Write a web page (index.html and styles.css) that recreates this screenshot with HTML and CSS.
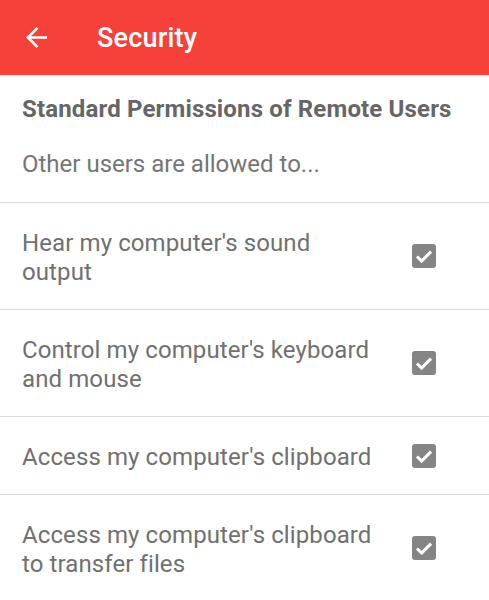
FILE: index.html
```html
<!DOCTYPE html>
<html>
<head>
<meta charset="utf-8">
<link rel="stylesheet" href="styles.css">
</head>
<body>
<header class="appbar">
  <svg class="back" viewBox="4 4 16 16" aria-hidden="true"><path d="M20 11H7.83l5.59-5.59L12 4l-8 8 8 8 1.41-1.41L7.83 13H20v-2z" fill="#fff"/></svg>
  <h1 class="title">Security</h1>
</header>
<section class="intro">
  <h2 class="heading">Standard Permissions of Remote Users</h2>
  <p class="sub">Other users are allowed to...</p>
</section>
<ul class="list">
  <li class="row"><span class="label">Hear my computer's sound output</span><span class="check"><svg viewBox="0 0 24 24"><path d="M5 12.5l4.6 4.6L19 7.6" fill="none" stroke="#fff" stroke-width="3"/></svg></span></li>
  <li class="row"><span class="label">Control my computer's keyboard and mouse</span><span class="check"><svg viewBox="0 0 24 24"><path d="M5 12.5l4.6 4.6L19 7.6" fill="none" stroke="#fff" stroke-width="3"/></svg></span></li>
  <li class="row"><span class="label">Access my computer's clipboard</span><span class="check"><svg viewBox="0 0 24 24"><path d="M5 12.5l4.6 4.6L19 7.6" fill="none" stroke="#fff" stroke-width="3"/></svg></span></li>
  <li class="row"><span class="label">Access my computer's clipboard to transfer files</span><span class="check"><svg viewBox="0 0 24 24"><path d="M5 12.5l4.6 4.6L19 7.6" fill="none" stroke="#fff" stroke-width="3"/></svg></span></li>
</ul>
</body>
</html>
```
FILE: styles.css
```css
* { box-sizing: border-box; }
html, body { margin: 0; padding: 0; background: #fff; }
body { font-family: Roboto, "Noto Sans", sans-serif; color: #6e6e6e; }
.appbar {
  height: 76px;
  background: #f5413a;
  display: flex;
  align-items: center;
  padding-left: 26px;
  border-bottom: 1px solid #e6e6e6;
}
.back { width: 21px; height: 21px; display: block; }
.title {
  margin: 0 0 0 50px;
  font-size: 27px;
  font-weight: 500;
  color: #fff;
  line-height: 30px;
  letter-spacing: 0.2px;
}
.intro {
  padding: 19px 22px 23px;
  border-bottom: 1px solid #dcdcdc;
}
.heading {
  margin: 0;
  font-size: 24px;
  font-weight: 700;
  line-height: 28px;
  color: #666;
  letter-spacing: 0.15px;
}
.sub {
  margin: 27px 0 0;
  font-size: 24px;
  line-height: 29px;
  color: #757575;
}
.list { list-style: none; margin: 0; padding: 0; }
.row {
  display: flex;
  align-items: center;
  gap: 34px;
  padding: 26px 53px 22px 22px;
  border-bottom: 1px solid #dcdcdc;
}
.label {
  flex: 1;
  font-size: 24px;
  line-height: 29px;
  color: #707070;
  letter-spacing: 0.1px;
}
.check {
  width: 24px;
  height: 24px;
  margin-top: -4px;
  border-radius: 3px;
  background: #858585;
  display: flex;
}
.check svg { width: 24px; height: 24px; }
```
